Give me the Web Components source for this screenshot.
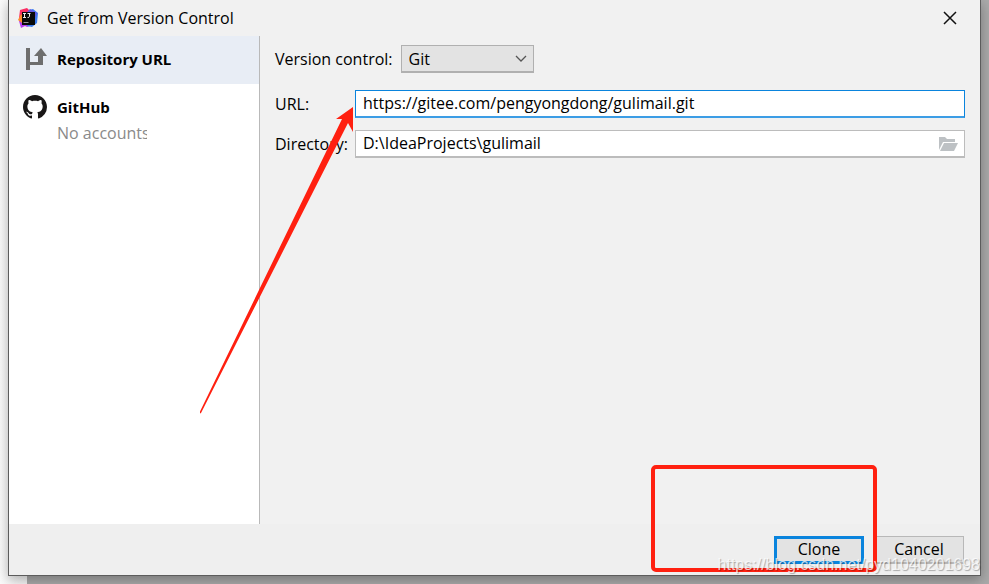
<!DOCTYPE html>
<html lang="en">
<head>
<meta charset="utf-8">
<title>Get from Version Control</title>
<style>
  html, body { height: 100%; margin: 0; }
  body { overflow: hidden; font: 16px/20px "Open Sans", "Noto Sans", sans-serif; color: #000; }
</style>
</head>
<body>
<vcs-desktop>
  <vcs-dialog heading="Get from Version Control">
    <vcs-sidebar slot="side">
      <vcs-source name="Repository URL" selected>
        <svg slot="icon" width="24" height="24" viewBox="0 0 24 24" fill="#6e6e6e"><path d="M3 1h4v14h8V9h-4l7-8 6 8h-4v9H7v5H3z"/></svg>
      </vcs-source>
      <vcs-source name="GitHub" note="No accounts">
        <svg slot="icon" width="24" height="24" viewBox="0 0 16 16" fill="#191717"><path d="M8 0C3.58 0 0 3.58 0 8c0 3.54 2.29 6.53 5.47 7.59.4.07.55-.17.55-.38 0-.19-.01-.82-.01-1.49-2.01.37-2.53-.49-2.69-.94-.09-.23-.48-.94-.82-1.13-.28-.15-.68-.52-.01-.53.63-.01 1.08.58 1.23.82.72 1.21 1.87.87 2.33.66.07-.52.28-.87.51-1.07-1.78-.2-3.64-.89-3.64-3.95 0-.87.31-1.59.82-2.15-.08-.2-.36-1.02.08-2.12 0 0 .67-.21 2.2.82.64-.18 1.32-.27 2-.27s1.36.09 2 .27c1.53-1.04 2.2-.82 2.2-.82.44 1.1.16 1.92.08 2.12.51.56.82 1.27.82 2.15 0 3.07-1.87 3.75-3.65 3.95.29.25.54.73.54 1.48 0 1.07-.01 1.93-.01 2.2 0 .21.15.46.55.38A8.01 8.01 0 0 0 16 8c0-4.42-3.58-8-8-8z"/></svg>
      </vcs-source>
    </vcs-sidebar>
    <clone-form slot="main"></clone-form>
    <dialog-actions slot="foot"></dialog-actions>
  </vcs-dialog>
</vcs-desktop>
<red-marks></red-marks>

<script>
const define = (name, html, setup) => customElements.define(name, class extends HTMLElement {
  connectedCallback() {
    if (this.shadowRoot) return;
    const t = document.createElement('template');
    t.innerHTML = html;
    this.attachShadow({ mode: 'open' }).append(t.content.cloneNode(true));
    if (setup) setup(this, this.shadowRoot);
  }
});

define('vcs-desktop', `
<style>
  :host { display: grid; box-sizing: border-box; height: 100vh; padding: 0 8px 8px;
    background: linear-gradient(90deg, #fbfbfb 0, #f6f6f6 27px, #aaa 27px); }
</style><slot></slot>`);

define('vcs-dialog', `
<style>
  :host { display: grid; grid-template-rows: 36px 1fr auto; background: #f1f1f1; min-height: 0;
    border: solid #5c5c5c; border-width: 0 1px 1px; box-shadow: 0 4px 12px rgba(0,0,0,.3); }
  header { display: flex; align-items: center; padding: 0 22px 0 9px; }
  h1 { flex: 1; margin: 0 0 0 9px; font: inherit; }
  button { display: grid; place-items: center; width: 16px; height: 24px; padding: 0; border: 0; background: none; }
  .body { display: grid; grid-template-columns: 251px 1fr; min-height: 0; }
  footer { background: #efefef; }
</style>
<header>
  <svg width="20" height="20" viewBox="0 0 20 20">
    <path d="M2 2 9 0l4 4-4 12-8-6z" fill="#fb2d63"/><path d="M1 13l7-6 4 11-3 1-2-1-4 2z" fill="#b43cf0"/>
    <path d="M0 12l3-6 4 5-3 4z" fill="#fc8b2e"/><path d="M11 2l4-1 5 4-1 10-5 4-5-1z" fill="#3b7df0"/>
    <path d="M12 1l-3 3 7 9 3-8z" fill="#6557e0"/><rect x="4" y="4" width="13" height="13" fill="#090909"/>
    <path d="M5 5.500h3M6.500 5.500v4M5 9.500h3M9.500 5.500h3M11.500 5.500v3q0 1-2 1" stroke="#eee" fill="none"/><path d="M5.500 14.500h5" stroke="#999"/>
  </svg>
  <h1></h1>
  <button aria-label="Close"><svg width="14" height="14" viewBox="0 0 14 14"><path d="m1 1 12 12M13 1 1 13" stroke="#111" stroke-width="1.500"/></svg></button>
</header>
<div class="body"><slot name="side"></slot><slot name="main"></slot></div>
<footer><slot name="foot"></slot></footer>`, (h, r) => {
  r.querySelector('h1').textContent = h.getAttribute('heading');
});

define('vcs-sidebar', `<style>:host { display: block; background: #fff; border-right: 1px solid #b9b9b9; }</style><slot></slot>`);

define('vcs-source', `
<style>
  :host { display: grid; grid-template-columns: 24px auto; justify-content: start; column-gap: 10px; padding: 0 14px 2px; }
  :host([selected]) { background: #e8edf5; }
  .icon { display: grid; height: 46px; align-items: center; }
  b { align-self: center; font-size: 15px; }
  small { grid-column: 2; width: 90px; margin-top: -7px; overflow: hidden; white-space: nowrap; font-size: 16px; color: #8a8a8a; }
</style>
<span class="icon"><slot name="icon"></slot></span><b></b>`, (h, r) => {
  r.querySelector('b').textContent = h.getAttribute('name');
  if (h.hasAttribute('note')) {
    const s = document.createElement('small');
    s.textContent = h.getAttribute('note');
    r.append(s);
  }
});

define('clone-form', `
<style>
  :host { display: block; padding: 9px 15px 0; }
  div { display: flex; align-items: center; }
  .kind { gap: 8px; margin-bottom: 17px; }
  .pick { display: grid; align-items: center; width: 133px; }
  .pick > * { grid-area: 1 / 1; }
  .pick svg { justify-self: end; margin-right: 7px; pointer-events: none; }
  select, input { box-sizing: border-box; height: 28px; margin: 0; font: inherit; color: inherit; border-radius: 0; outline: 0; }
  select { appearance: none; width: 100%; padding: 0 7px; background: #e3e3e3; border: 1px solid #b0b0b0; border-bottom-width: 2px; }
  .fields { display: grid; grid-template-columns: 72px 1fr; column-gap: 8px; row-gap: 12px; }
  input { grid-column: 2; grid-row: 1; width: 100%; padding: 0 7px 2px; background: #fff; border: 1px solid #bcbcbc; border-bottom-width: 2px; }
  #url { border-color: #0a84dd; border-bottom-color: #3c9de5; }
  .path { display: grid; }
  .path > * { grid-area: 1 / 1; }
  .path button { justify-self: end; display: grid; place-items: center; width: 20px; height: 20px; margin-right: 7px; padding: 0; border: 0; background: none; }
</style>
<div class="kind"><label for="kind">Version control:</label>
  <span class="pick"><select id="kind"><option>Git</option></select>
  <svg width="12" height="8" viewBox="0 0 12 8"><path d="m1 1 5 5 5-5" fill="none" stroke="#555" stroke-width="1.300"/></svg></span></div>
<div class="fields"><label for="url">URL:</label><input id="url" value="https://gitee.com/pengyongdong/gulimail.git">
  <label for="dir">Directory:</label>
  <div class="path"><input id="dir" value="D:\\IdeaProjects\\gulimail">
  <button aria-label="Browse"><svg width="20" height="16" viewBox="0 0 20 16" fill="#bdc1c4"><path d="M1 14V1h6l2 2h8v3H5z"/><path d="M6 7h14l-4 8H2z"/></svg></button></div>
</div>`);

define('dialog-actions', `
<style>
  :host { display: flex; justify-content: flex-end; gap: 10px; padding: 12px 16px 11px; }
  button { box-sizing: border-box; width: 90px; height: 28px; padding: 0 0 2px; font: inherit; color: inherit; background: #e3e3e3; border: 1px solid #b8b8b8; border-bottom-width: 2px; }
  .main { border: 3px solid #0a84dd; }
</style>
<button class="main">Clone</button><button>Cancel</button>`);

define('red-marks', `
<style>
  :host { position: absolute; inset: 0; pointer-events: none; }
  svg { position: absolute; left: 199px; top: 107px; }
  .box { position: absolute; right: 112px; bottom: 12px; width: 218px; height: 99px; border: 4px solid #ff2010; border-radius: 5px; }
  .credit { position: absolute; right: 9px; bottom: 9px; font: 16px/20px "Liberation Sans", sans-serif; color: rgba(255,255,255,.75); text-shadow: 1px 1px 1px rgba(0,0,0,.3); }
</style>
<svg width="156" height="308" viewBox="0 0 156 308"><path d="M154 0 137 12h6L1 304.500v2L2 306 149 16l5 9z" fill="#ff2010"/></svg>
<div class="box"></div><span class="credit">https://blog.csdn.net/pyd1040201698</span>`);
</script>
</body>
</html>
